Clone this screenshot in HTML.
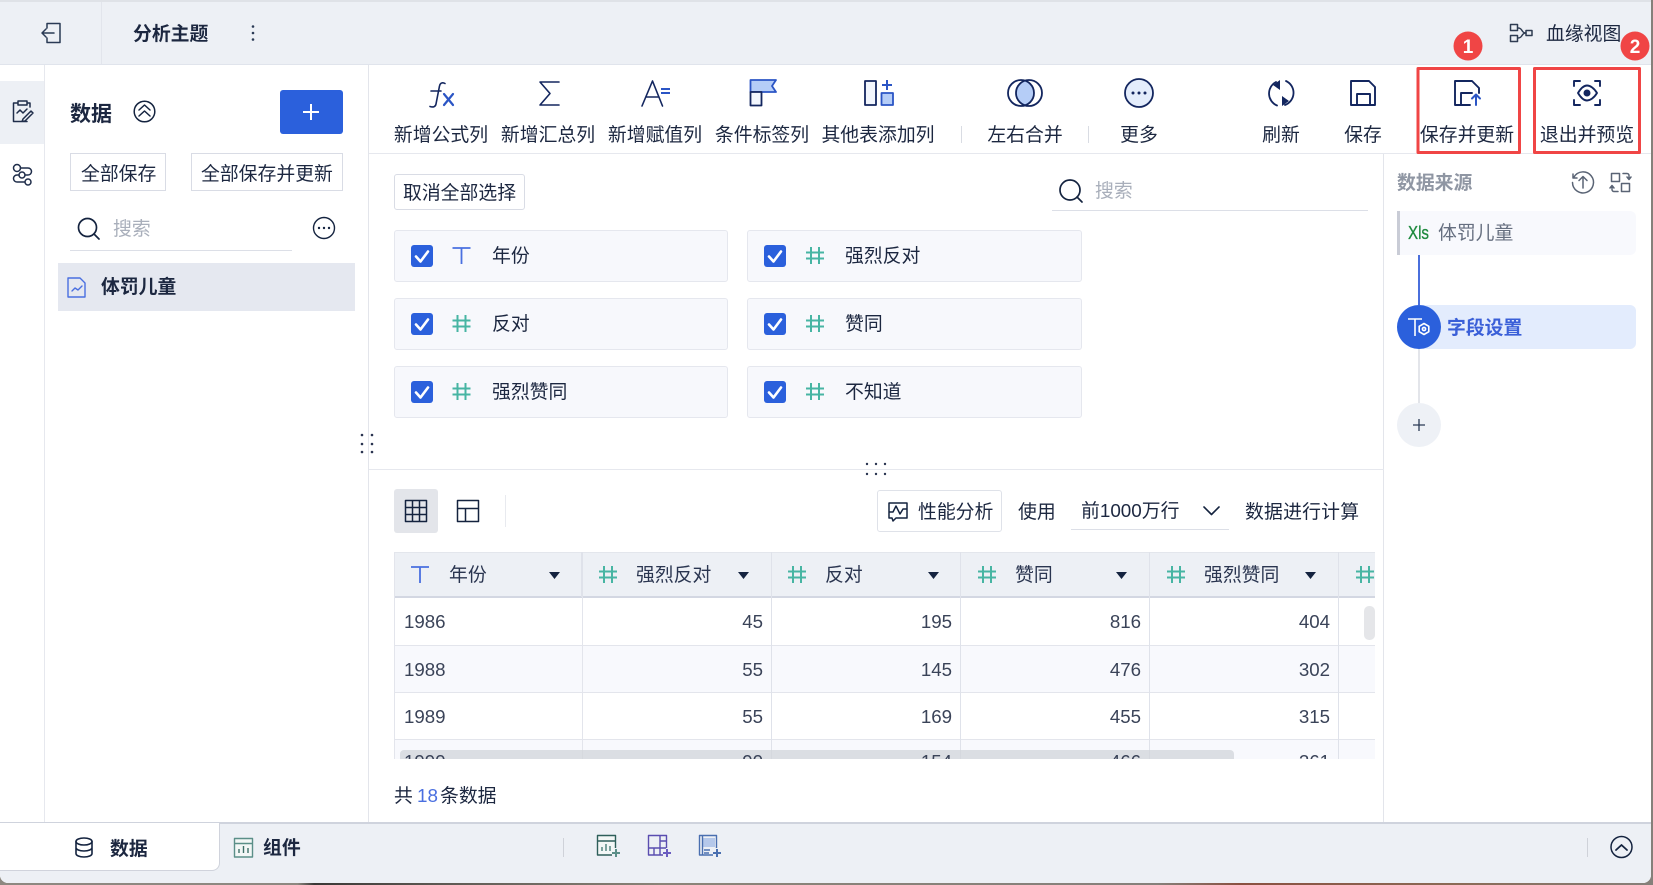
<!DOCTYPE html>
<html lang="zh">
<head>
<meta charset="utf-8">
<title>分析主题</title>
<style>
html,body{margin:0;padding:0;width:1653px;height:885px;overflow:hidden}
body{background:linear-gradient(90deg,#8d8880 0,#8d8880 18%,#3a3836 19%,#5a5650 26%,#8a8478 40%,#85807a 70%,#8a5040 75%,#8a6a55 88%,#85807a 100%);font-family:"Liberation Sans","Noto Sans CJK SC",sans-serif;color:#1c2740}
#win{position:absolute;left:0;top:0;width:1651px;height:883px;background:#fff;border-radius:0 0 8px 8px;overflow:hidden}
.b{position:absolute;box-sizing:border-box}
.t{position:absolute;white-space:nowrap;line-height:24px;font-size:18.85px;font-family:"Liberation Sans","Noto Sans CJK SC",sans-serif}
.c{transform:translateX(-50%)}
.h{font-weight:700}
.n{text-align:right;color:#3a4358;font-size:18.7px}
.card{position:absolute;box-sizing:border-box;background:#f7f8fc;border:1px solid #e5e7ee;border-radius:3px;height:52px}
svg{position:absolute;left:0;top:0;overflow:visible}
</style>
</head>
<body>
<div id="win">
<!-- top bar -->
<div class="b" style="left:0;top:0;width:1651px;height:65px;background:#edf0f5;border-top:2px solid #dfe2e7;border-bottom:1px solid #e0e4ec"></div>
<div class="b" style="left:101px;top:2px;width:1px;height:62px;background:#e2e5ec"></div>
<!-- rail -->
<div class="b" style="left:0;top:81px;width:44px;height:63px;background:#edf0f5"></div>
<div class="b" style="left:44px;top:65px;width:1px;height:757px;background:#e6e8ee"></div>
<div class="b" style="left:368px;top:65px;width:1px;height:757px;background:#e3e5eb"></div>
<div class="b" style="left:1383px;top:154px;width:1px;height:668px;background:#e3e5eb"></div>
<div class="b" style="left:369px;top:153px;width:1282px;height:1px;background:#e6e8ee"></div>
<div class="b" style="left:369px;top:469px;width:1015px;height:1px;background:#e6e8ee"></div>

<!-- left panel -->
<span class="t h" style="left:70px;top:103px;font-size:21px">数据</span>
<div class="b" style="left:280px;top:90px;width:63px;height:44px;background:#2b60dc;border-radius:3px"></div>
<div class="b" style="left:70px;top:153px;width:96px;height:38px;border:1px solid #d9dce5"></div>
<div class="b" style="left:191px;top:153px;width:152px;height:38px;border:1px solid #d9dce5"></div>
<span class="t" style="left:81px;top:162px">全部保存</span>
<span class="t" style="left:201px;top:162px">全部保存并更新</span>
<span class="t" style="left:113px;top:217px;color:#a9afbb">搜索</span>
<div class="b" style="left:70px;top:250px;width:222px;height:1px;background:#dcdfe7"></div>
<div class="b" style="left:58px;top:263px;width:297px;height:48px;background:#e5e8f0"></div>
<span class="t h" style="left:101px;top:275px">体罚儿童</span>

<!-- header texts -->
<span class="t h" style="left:133px;top:22px">分析主题</span>
<span class="t" style="left:1546px;top:22px">血缘视图</span>

<!-- toolbar labels -->
<span class="t c" style="left:441px;top:123px">新增公式列</span>
<span class="t c" style="left:548px;top:123px">新增汇总列</span>
<span class="t c" style="left:655px;top:123px">新增赋值列</span>
<span class="t c" style="left:762px;top:123px">条件标签列</span>
<span class="t c" style="left:878px;top:123px">其他表添加列</span>
<span class="t c" style="left:1025px;top:123px">左右合并</span>
<span class="t c" style="left:1139px;top:123px">更多</span>
<span class="t c" style="left:1281px;top:123px">刷新</span>
<span class="t c" style="left:1363px;top:123px">保存</span>
<span class="t c" style="left:1467px;top:123px">保存并更新</span>
<span class="t c" style="left:1587px;top:123px">退出并预览</span>
<div class="b" style="left:961px;top:126px;width:1px;height:17px;background:#d9dce3"></div>
<div class="b" style="left:1088px;top:126px;width:1px;height:17px;background:#d9dce3"></div>

<!-- field area -->
<div class="b" style="left:394px;top:174px;width:131px;height:36px;border:1px solid #d9dce5;border-radius:3px"></div>
<span class="t" style="left:403px;top:181px">取消全部选择</span>
<span class="t" style="left:1095px;top:179px;color:#a9afbb">搜索</span>
<div class="b" style="left:1052px;top:210px;width:316px;height:1px;background:#dcdfe7"></div>

<div class="card" style="left:394px;top:230px;width:334px"></div>
<div class="card" style="left:747px;top:230px;width:335px"></div>
<div class="card" style="left:394px;top:298px;width:334px"></div>
<div class="card" style="left:747px;top:298px;width:335px"></div>
<div class="card" style="left:394px;top:366px;width:334px"></div>
<div class="card" style="left:747px;top:366px;width:335px"></div>
<span class="t" style="left:492px;top:244px">年份</span>
<span class="t" style="left:845px;top:244px">强烈反对</span>
<span class="t" style="left:492px;top:312px">反对</span>
<span class="t" style="left:845px;top:312px">赞同</span>
<span class="t" style="left:492px;top:380px">强烈赞同</span>
<span class="t" style="left:845px;top:380px">不知道</span>

<!-- table controls -->
<div class="b" style="left:394px;top:489px;width:44px;height:44px;background:#e3e5ea;border-radius:3px"></div>
<div class="b" style="left:505px;top:495px;width:1px;height:32px;background:#e8eaef"></div>
<div class="b" style="left:877px;top:490px;width:125px;height:42px;border:1px solid #dfe2e9;border-radius:3px"></div>
<span class="t" style="left:918px;top:500px">性能分析</span>
<span class="t" style="left:1018px;top:500px">使用</span>
<span class="t" style="left:1081px;top:499px">前1000万行</span>
<div class="b" style="left:1071px;top:529px;width:158px;height:1px;background:#dcdfe7"></div>
<span class="t" style="left:1245px;top:500px;letter-spacing:.2px">数据进行计算</span>

<!-- table -->
<div class="b" id="tbl" style="left:394px;top:552px;width:981px;height:207px;overflow:hidden;border-left:1px solid #e3e5ec">
  <div class="b" style="left:0;top:0;width:981px;height:46px;background:#edf0f5;border-top:1px solid #e3e6ec;border-bottom:2px solid #d3d7e2"></div>
  <div class="b" style="left:0;top:46px;width:981px;height:48px;border-bottom:1px solid #e3e5ec"></div>
  <div class="b" style="left:0;top:94px;width:981px;height:47px;background:#f8f9fd;border-bottom:1px solid #e3e5ec"></div>
  <div class="b" style="left:0;top:141px;width:981px;height:47px;border-bottom:1px solid #e3e5ec"></div>
  <div class="b" style="left:0;top:188px;width:981px;height:19px;background:#f8f9fd"></div>
  <div class="b" style="left:186px;top:0;width:2px;height:45px;background:#dfe2ea"></div>
  <div class="b" style="left:187px;top:45px;width:1px;height:162px;background:#e3e5ec"></div>
  <div class="b" style="left:376px;top:0;width:1px;height:207px;background:#dfe2ea"></div>
  <div class="b" style="left:565px;top:0;width:1px;height:207px;background:#dfe2ea"></div>
  <div class="b" style="left:754px;top:0;width:1px;height:207px;background:#dfe2ea"></div>
  <div class="b" style="left:943px;top:0;width:1px;height:207px;background:#dfe2ea"></div>
  <div class="b" style="left:5px;top:198px;width:834px;height:9px;background:rgba(210,212,218,.75);border-radius:4px 4px 0 0"></div>
  <div class="b" style="left:969px;top:54px;width:11px;height:34px;background:#e5e6e9;border-radius:5px"></div>
  <span class="t" style="left:54px;top:11px;color:#2a3550">年份</span>
  <span class="t" style="left:241px;top:11px;color:#2a3550">强烈反对</span>
  <span class="t" style="left:430px;top:11px;color:#2a3550">反对</span>
  <span class="t" style="left:620px;top:11px;color:#2a3550">赞同</span>
  <span class="t" style="left:809px;top:11px;color:#2a3550">强烈赞同</span>

  <span class="t n" style="left:9px;top:58px">1986</span>
  <span class="t n" style="left:9px;top:106px">1988</span>
  <span class="t n" style="left:9px;top:153px">1989</span>
  <span class="t n" style="left:9px;top:198px">1990</span>
  <span class="t n" style="right:612px;top:58px">45</span>
  <span class="t n" style="right:612px;top:106px">55</span>
  <span class="t n" style="right:612px;top:153px">55</span>
  <span class="t n" style="right:612px;top:198px">90</span>
  <span class="t n" style="right:423px;top:58px">195</span>
  <span class="t n" style="right:423px;top:106px">145</span>
  <span class="t n" style="right:423px;top:153px">169</span>
  <span class="t n" style="right:423px;top:198px">154</span>
  <span class="t n" style="right:234px;top:58px">816</span>
  <span class="t n" style="right:234px;top:106px">476</span>
  <span class="t n" style="right:234px;top:153px">455</span>
  <span class="t n" style="right:234px;top:198px">466</span>
  <span class="t n" style="right:45px;top:58px">404</span>
  <span class="t n" style="right:45px;top:106px">302</span>
  <span class="t n" style="right:45px;top:153px">315</span>
  <span class="t n" style="right:45px;top:198px">261</span>
</div>

<span class="t" style="left:394px;top:784px">共</span>
<span class="t" style="left:417px;top:784px;color:#4a6fe0">18</span>
<span class="t" style="left:440px;top:784px">条数据</span>

<!-- right panel -->
<span class="t h" style="left:1397px;top:171px;color:#8f96a3">数据来源</span>
<div class="b" style="left:1397px;top:211px;width:239px;height:44px;background:#f8f9fd;border-left:3px solid #c9ccd6;border-radius:0 6px 6px 0"></div>
<span class="t" style="left:1438px;top:221px;color:#666f80">体罚儿童</span>
<div class="b" style="left:1418px;top:255px;width:2px;height:50px;background:#4a6fdc"></div>
<div class="b" style="left:1419px;top:305px;width:217px;height:44px;background:#e3ecfd;border-radius:0 6px 6px 0"></div>
<div class="b" style="left:1397px;top:305px;width:44px;height:44px;background:#2b60dc;border-radius:50%"></div>
<span class="t h" style="left:1447px;top:316px;color:#3a5fd8">字段设置</span>
<div class="b" style="left:1418px;top:349px;width:2px;height:54px;background:#e3e5ea"></div>
<div class="b" style="left:1397px;top:403px;width:44px;height:44px;background:#eef1f6;border-radius:50%"></div>

<!-- bottom bar -->
<div class="b" style="left:0;top:822px;width:1651px;height:61px;background:#edf0f5;border-top:2px solid #cfd3dd"></div>
<div class="b" style="left:0;top:823px;width:220px;height:48px;background:#fff;border-right:1px solid #d0d3dc;border-bottom:1px solid #d0d3dc;border-radius:0 0 8px 0"></div>
<span class="t h" style="left:110px;top:837px">数据</span>
<span class="t h" style="left:263px;top:836px">组件</span>
<div class="b" style="left:563px;top:838px;width:1px;height:19px;background:#cfd2d9"></div>
<div class="b" style="left:1587px;top:838px;width:1px;height:19px;background:#cfd2d9"></div>

<!-- icons, page coordinates -->
<svg width="1653" height="885" viewBox="0 0 1653 885" fill="none" stroke-linecap="round" stroke-linejoin="round">
<defs>
  <g id="cb"><rect width="22" height="22" rx="3" fill="#2b60dc"/><path d="M5 11.500l4.500 5L17 6.500" stroke="#fff" stroke-width="2.600" fill="none"/></g>
  <g id="hash" stroke="#47b5a3" stroke-width="2" stroke-linecap="butt"><path d="M5 0v17M13 0v17M0 5.500h18M0 11.500h18"/></g>
  <g id="tt" stroke="#4a70e0" stroke-width="1.800" stroke-linecap="butt"><path d="M0 1h18M9 1v16"/></g>
  <path id="car" d="M0 0h11L5.500 7z" fill="#14233f" stroke="none"/>
</defs>

<!-- back -->
<g stroke="#2a3a55" stroke-width="1.500"><path d="M47 28v-4.500h13v19H47V38M54 33H42M46 29l-4 4 4 4"/></g>
<g fill="#2a3a55"><circle cx="253" cy="26.500" r="1.300"/><circle cx="253" cy="33" r="1.300"/><circle cx="253" cy="39.500" r="1.300"/></g>
<!-- rail -->
<g stroke="#1f2d4a" stroke-width="1.500"><path d="M18 103h-4.500v18.500H27M27 103h3v4M18 101h9v4h-9zM17 113l3-3 3 3 4-4M23 119l8-8 2 2-8 8-3 .5z"/>
<path d="M20.500 168H28a3.500 3.500 0 0 1 0 7h-3M19 175h-2a3.500 3.500 0 0 0 0 7h7.500"/><circle cx="17" cy="168" r="3.500"/><circle cx="22" cy="175" r="3"/><circle cx="28" cy="182" r="3"/></g>
<!-- collapse -->
<g stroke="#14233f" stroke-width="1.500"><circle cx="144.500" cy="111.500" r="10.300"/><path d="M139 110l5.500-5 5.500 5M139 116l5.500-5 5.500 5"/></g>
<path d="M303 112h16M311 104v16" stroke="#fff" stroke-width="2" stroke-linecap="butt"/>
<!-- search -->
<g stroke="#14233f" stroke-width="1.700"><circle cx="87.500" cy="227.500" r="9"/><path d="M94 234l5 5"/><circle cx="1070" cy="190" r="10"/><path d="M1077 197l5 5"/></g>
<g stroke="#14233f" stroke-width="1.400"><circle cx="324" cy="228" r="10.500"/></g>
<g fill="#14233f"><circle cx="319" cy="228" r="1.200"/><circle cx="324" cy="228" r="1.200"/><circle cx="329" cy="228" r="1.200"/></g>
<!-- doc -->
<g stroke="#4a6fe0" stroke-width="1.400"><path d="M68 278h12l5 5v14H68zM72 291l3-3 3 2 4-4"/></g>
<!-- lineage -->
<g stroke="#2f3c52" stroke-width="1.500"><rect x="1510.500" y="24.500" width="7" height="6"/><rect x="1510.500" y="35.500" width="7" height="6"/><rect x="1526" y="30.500" width="6" height="5"/><path d="M1518 28c5 0 3 5 8 5M1518 38c5 0 3-5 8-5"/></g>

<!-- toolbar icons -->
<g stroke="#13265f" stroke-width="1.600">
<path d="M445 83.500c-2.500-1.500-5-.5-5.500 2.500L436 104c-.5 3-3 3.500-6 2.500M431 91h10"/>
<path d="M559 82h-19l10 11.500L540 105h19"/>
<path d="M642 106l10.500-25L662.500 106M646 97h13"/>
</g>
<path d="M444 94l9 11M453 94l-9 11" stroke="#2b55c5" stroke-width="2.200"/>
<path d="M661 89h9M661 93h9" stroke="#2b55c5" stroke-width="2" stroke-linecap="butt"/>
<path d="M750.500 80H776l-4 6 4 6H750.500z" fill="#b5cdf7" stroke="#2b55c5" stroke-width="1.800"/>
<rect x="750.500" y="92" width="11" height="13.500" fill="#f2f6fd" stroke="#13265f" stroke-width="1.800"/>
<rect x="865" y="81" width="11" height="24" fill="#f2f6fd" stroke="#13265f" stroke-width="1.800"/>
<rect x="881.500" y="93" width="11.500" height="12" fill="#b5cdf7" stroke="#2b55c5" stroke-width="1.800"/>
<path d="M887 80v10M882 85h10" stroke="#2b55c5" stroke-width="2" stroke-linecap="butt"/>
<path d="M1025 80.600A13 13 0 0 1 1025 105.400A13 13 0 0 1 1025 80.600z" fill="#b5cdf7"/>
<g stroke="#13265f" stroke-width="1.800"><circle cx="1021" cy="93" r="13"/><circle cx="1029" cy="93" r="13"/></g>
<circle cx="1139" cy="93" r="14" fill="#e4edfc" stroke="#13265f" stroke-width="1.800"/>
<g fill="#13265f"><circle cx="1133" cy="93" r="1.500"/><circle cx="1139" cy="93" r="1.500"/><circle cx="1145" cy="93" r="1.500"/></g>
<g stroke="#13265f" stroke-width="1.800"><path d="M1276 82A13 13 0 0 0 1277 105.500M1286 81A13 13 0 0 1 1285 105"/></g>
<path d="M1280 80v10l-7-5zM1282 96v10l7-5z" fill="#13265f" stroke="none"/>
<g stroke="#13265f" stroke-width="1.900"><path d="M1351 81h18l6 6v18h-24zM1357 105V94h13v11"/>
<path d="M1470 105h-15V81h17l7 7v5M1461 105V93h11"/>
<path d="M1574 86v-5h6M1595 81h5v5M1574 100v5h6M1595 105h5v-5M1578 93c3-5 6-7.500 9-7.500s7 2.500 10 7.500c-3 5-7 7.500-10 7.500s-6-2.500-9-7.500z"/></g>
<circle cx="1587" cy="93" r="3.500" fill="#13265f"/>
<path d="M1476 105V95M1472 98.500l4-4 4 4" stroke="#2b55c5" stroke-width="2"/>

<!-- red boxes -->
<rect x="1418" y="68.500" width="101.500" height="84" stroke="#f04545" stroke-width="3" stroke-linecap="butt"/>
<rect x="1534.500" y="68.500" width="105" height="84" stroke="#f04545" stroke-width="3" stroke-linecap="butt"/>
<circle cx="1468" cy="46" r="14.500" fill="#f04545"/>
<circle cx="1635" cy="46" r="14.500" fill="#f04545"/>
<text x="1468" y="53" fill="#fff" font-size="19" font-weight="700" text-anchor="middle" font-family="Liberation Sans, sans-serif">1</text>
<text x="1635" y="53" fill="#fff" font-size="19" font-weight="700" text-anchor="middle" font-family="Liberation Sans, sans-serif">2</text>

<!-- field rows -->
<use href="#cb" x="411" y="245"/><use href="#cb" x="764" y="245"/>
<use href="#cb" x="411" y="313"/><use href="#cb" x="764" y="313"/>
<use href="#cb" x="411" y="381"/><use href="#cb" x="764" y="381"/>
<use href="#tt" x="452.500" y="247"/><use href="#hash" x="806" y="247"/>
<use href="#hash" x="452.500" y="315"/><use href="#hash" x="806" y="315"/>
<use href="#hash" x="452.500" y="383"/><use href="#hash" x="806" y="383"/>

<!-- drag dots -->
<g fill="#2a3450"><circle cx="362" cy="435" r="1.300"/><circle cx="372" cy="435" r="1.300"/><circle cx="362" cy="444" r="1.300"/><circle cx="372" cy="444" r="1.300"/><circle cx="362" cy="452" r="1.300"/><circle cx="372" cy="452" r="1.300"/>
<circle cx="867" cy="464" r="1.200"/><circle cx="876" cy="464" r="1.200"/><circle cx="885" cy="464" r="1.200"/><circle cx="867" cy="474" r="1.200"/><circle cx="876" cy="474" r="1.200"/><circle cx="885" cy="474" r="1.200"/></g>

<!-- table controls -->
<g stroke="#14233f" stroke-width="1.500" stroke-linecap="butt"><path d="M405.500 500.500h21v21h-21zM405.500 507.500h21M405.500 514.500h21M412.500 500.500v21M419.500 500.500v21"/>
<path d="M457.500 500.500h21v21h-21zM457.500 508.500h21M465.500 508.500v13"/>
<path d="M889 503h18v15h-11l-3 3-1-3h-3zM889 512h4l3-6 4 8 3-5h4"/></g>
<path d="M1204 507l7.500 7.500 7.500-7.500" stroke="#14233f" stroke-width="1.600"/>

<!-- table header icons -->
<use href="#tt" x="411" y="566"/><use href="#car" x="549" y="572"/>
<use href="#hash" x="599" y="566"/><use href="#car" x="738" y="572"/>
<use href="#hash" x="788" y="566"/><use href="#car" x="928" y="572"/>
<use href="#hash" x="978" y="566"/><use href="#car" x="1116" y="572"/>
<use href="#hash" x="1167" y="566"/><use href="#car" x="1305" y="572"/>
<g><svg x="0" y="0" width="1375" height="885" style="overflow:hidden"><use href="#hash" x="1356" y="566"/></svg></g>

<!-- right panel icons -->
<g stroke="#5a6475" stroke-width="1.500"><path d="M1574 177a10.500 10.500 0 1 1-1.500 5.500M1573 174v4h4M1583 188v-11M1579 180.500l4-4 4 4"/>
<path d="M1611.500 173.500h8v8h-8zM1621.500 183.500h8v8h-8zM1623 173.500h4a2 2 0 0 1 2 2v4M1627 177l2 2.500 2-2.500M1618 191.500h-4a2 2 0 0 1-2-2v-4M1614 188l-2-2.500-2 2.500"/></g>
<text x="1408" y="239" font-size="18" fill="#1e8a3e" stroke="#1e8a3e" stroke-width=".3" textLength="21" lengthAdjust="spacingAndGlyphs" font-family="Liberation Sans, sans-serif">Xls</text>
<g stroke="#fff" stroke-width="1.600" stroke-linecap="butt"><path d="M1408 319h14M1415 319v17M1424 323.500l4.800 2.800v5.400l-4.800 2.800-4.800-2.800v-5.400z"/><circle cx="1424" cy="329" r="1.600"/></g>
<path d="M1413 425h12M1419 419v12" stroke="#2a3a55" stroke-width="1.300" stroke-linecap="butt"/>

<!-- bottom icons -->
<g stroke="#14233f" stroke-width="1.600"><ellipse cx="84" cy="841.500" rx="8" ry="3.500"/><path d="M76 841.500v12c0 2 3.500 3.500 8 3.500s8-1.500 8-3.500v-12M76 847.500c0 2 3.500 3.500 8 3.500s8-1.500 8-3.500"/></g>
<g stroke="#5b8f88" stroke-width="1.400" stroke-linecap="butt"><rect x="234.500" y="838.500" width="18" height="18.500" fill="#f3f7f6"/><path d="M234.500 843.500h18"/><path d="M239 853v-4M243.500 853v-7M248 853v-5" stroke="#3d7068"/></g>
<g stroke="#2e5f5a" stroke-width="1.400" stroke-linecap="butt"><path d="M612 855h-14.500v-19.500h18V848" fill="#f3f7f6"/><path d="M597.500 841h18" /><path d="M602 851v-4M606 851v-7M610 851v-5" stroke="#4a7f78"/><path d="M612 853h8M616 849v8" stroke="#5b8f88" stroke-width="2"/></g>
<g stroke="#5a4db0" stroke-width="1.400" stroke-linecap="butt"><path d="M663 855h-14.500v-19.500h18V848"/><path d="M660 835.500V848M648.500 848H666M654 848v7M660 841h6M660 848v7"/><path d="M663 853h8M667 849v8" stroke="#6a5cc0" stroke-width="2"/></g>
<rect x="703" y="838" width="12" height="9" fill="#b5c8ea" stroke="none"/>
<g stroke="#4a6fb0" stroke-width="1.400" stroke-linecap="butt"><path d="M713 855h-13.500v-19.500h17V848M702.500 835.500V855M704 850h6M704 853h5"/><path d="M713 853h8M717 849v8" stroke="#4a6fb0" stroke-width="2"/></g>
<g stroke="#14233f" stroke-width="1.500"><circle cx="1621.500" cy="847" r="10.500"/><path d="M1616 850l5.500-5 5.500 5" stroke-width="1.800"/></g>
</svg>
</div>
</body>
</html>
